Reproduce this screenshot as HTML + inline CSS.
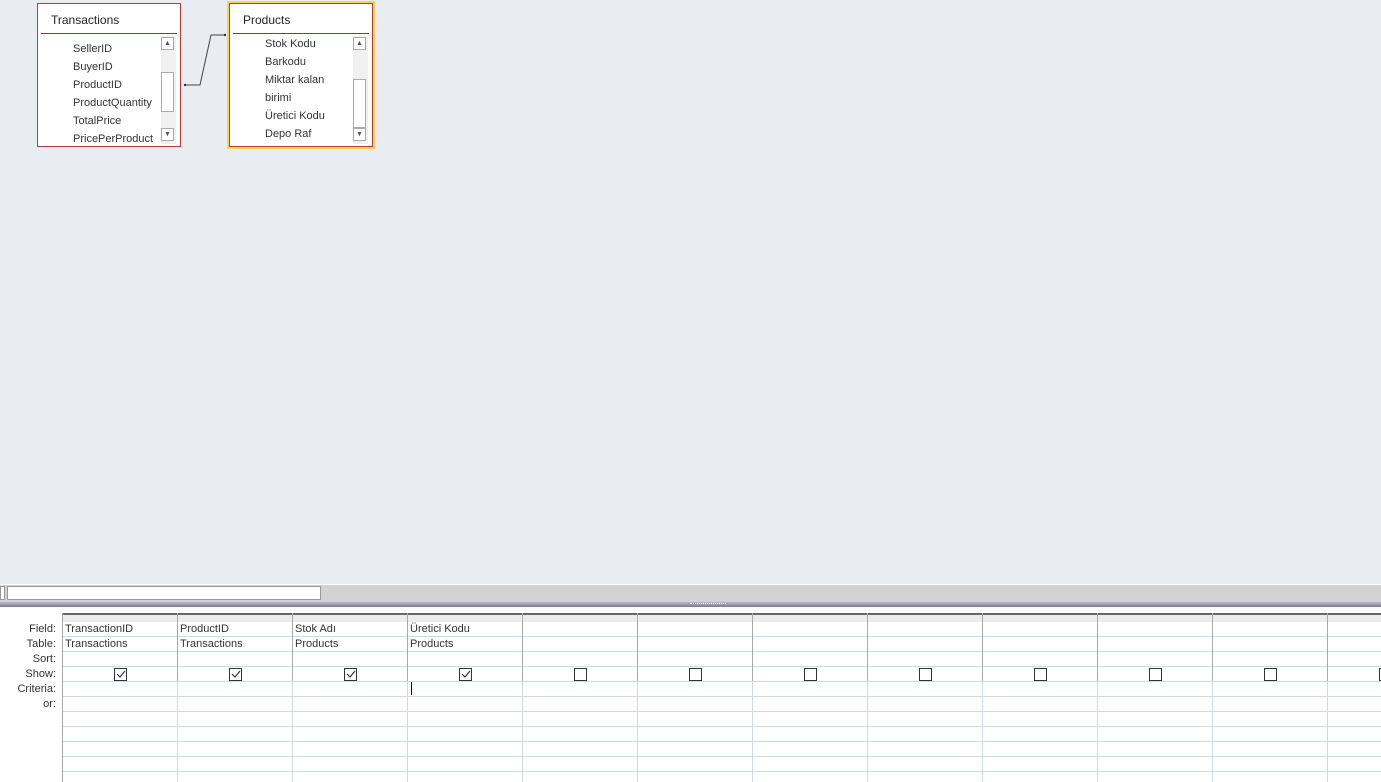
<!DOCTYPE html><html><head><style>
body{margin:0;width:1381px;height:782px;position:relative;overflow:hidden;font-family:"Liberation Sans",sans-serif;font-size:11px;color:#222;background:#fff}
.top{position:absolute;left:0;top:0;width:1381px;height:584px;background:#e9edf1}
.tbl{position:absolute;background:#fff;border:1px solid #b8383c;box-sizing:border-box}
.tbl .t{position:absolute;left:13px;top:9px;font-size:12px}
.tbl .ln{position:absolute;left:3px;right:3px;top:29px;height:1px;background:#8a3a3c}
.tbl .f{position:absolute;left:35px;font-size:11px;color:#333}
.sb{position:absolute;width:15px;background:#f0f0f0}
.ar{position:absolute;left:0;width:13px;height:13px;border:1px solid #aaa;background:#fff;box-sizing:border-box;font-size:7px;text-align:center;line-height:11px;color:#555}
.th{position:absolute;left:0;width:13px;border:1px solid #aaa;background:#fff;box-sizing:border-box}
.lab{position:absolute;right:1325px;font-size:11px;color:#333;text-align:right}
.cell{position:absolute;font-size:11px;color:#333}
</style></head><body>
<div class="top"></div>
<div class="tbl" style="left:37px;top:3px;width:144px;height:144px">
<div class="t">Transactions</div><div class="ln"></div>
<div class="f" style="top:30px;height:4px;overflow:hidden;width:80px"><div style="position:relative;top:-9px">PurchaseDate</div></div>
<div class="f" style="top:39px">SellerID</div><div class="f" style="top:57px">BuyerID</div><div class="f" style="top:75px">ProductID</div><div class="f" style="top:93px">ProductQuantity</div><div class="f" style="top:111px">TotalPrice</div><div class="f" style="top:129px">PricePerProduct</div>
<div class="sb" style="left:123px;top:32px;height:108px"><div class="ar" style="top:1px">▲</div><div class="th" style="top:36px;height:40px"></div><div class="ar" style="top:92px">▼</div></div>
</div>
<div style="position:absolute;left:227px;top:1px;width:148px;height:148px;background:#fdd54d"></div>
<div class="tbl" style="left:229px;top:3px;width:144px;height:144px">
<div class="t">Products</div><div class="ln"></div>
<div class="f" style="top:34px">Stok Kodu</div><div class="f" style="top:52px">Barkodu</div><div class="f" style="top:70px">Miktar kalan</div><div class="f" style="top:88px">birimi</div><div class="f" style="top:106px">Üretici Kodu</div><div class="f" style="top:124px">Depo Raf</div>
<div class="sb" style="left:123px;top:32px;height:108px"><div class="ar" style="top:1px">▲</div><div class="th" style="top:43px;height:49px"></div><div class="ar" style="top:92px">▼</div></div>
</div>
<svg style="position:absolute;left:0;top:0" width="400" height="150"><polyline points="185,85 200,85 211,35 226,35" fill="none" stroke="#444" stroke-width="1"/><circle cx="185" cy="85" r="1.2" fill="#333"/><circle cx="225" cy="35" r="1.2" fill="#333"/></svg>
<div style="position:absolute;left:0;top:584px;width:1381px;height:18px;background:#d2d2d2;border-top:1px solid #fff;box-sizing:border-box"></div>
<div style="position:absolute;left:0;top:586px;width:5px;height:14px;background:#fff;border:1px solid #999;box-sizing:border-box"></div>
<div style="position:absolute;left:7px;top:586px;width:314px;height:14px;background:#fff;border:1px solid #999;box-sizing:border-box"></div>
<div style="position:absolute;left:0;top:602px;width:1381px;height:5px;background:linear-gradient(#b8b8cc,#7a7a98)"></div>
<div style="position:absolute;left:690px;top:603px;width:36px;height:2px;border-top:1px dotted #fff"></div>
<div style="position:absolute;left:62px;top:613px;width:1319px;height:2px;background:#666"></div>
<div style="position:absolute;left:62px;top:615px;width:1319px;height:7px;background:#ececec"></div>
<svg style="position:absolute;left:0;top:613px" width="1381" height="169">
<g stroke="#d3d9e3" stroke-width="1">
<line x1="62" x2="1381" y1="23.5" y2="23.5"/><line x1="62" x2="1381" y1="38.5" y2="38.5"/><line x1="62" x2="1381" y1="53.5" y2="53.5"/><line x1="62" x2="1381" y1="68.5" y2="68.5"/><line x1="62" x2="1381" y1="83.5" y2="83.5"/><line x1="62" x2="1381" y1="98.5" y2="98.5"/><line x1="62" x2="1381" y1="113.5" y2="113.5"/><line x1="62" x2="1381" y1="128.5" y2="128.5"/><line x1="62" x2="1381" y1="143.5" y2="143.5"/><line x1="62" x2="1381" y1="158.5" y2="158.5"/>
</g>
<g stroke="#a8a8a8"><line x1="62.5" x2="62.5" y1="0" y2="169"/>
<line x1="177.5" x2="177.5" y1="0" y2="68"/><line x1="292.5" x2="292.5" y1="0" y2="68"/><line x1="407.5" x2="407.5" y1="0" y2="68"/><line x1="522.5" x2="522.5" y1="0" y2="68"/><line x1="637.5" x2="637.5" y1="0" y2="68"/><line x1="752.5" x2="752.5" y1="0" y2="68"/><line x1="867.5" x2="867.5" y1="0" y2="68"/><line x1="982.5" x2="982.5" y1="0" y2="68"/><line x1="1097.5" x2="1097.5" y1="0" y2="68"/><line x1="1212.5" x2="1212.5" y1="0" y2="68"/><line x1="1327.5" x2="1327.5" y1="0" y2="68"/></g>
<g stroke="#d3d9e3">
<line x1="177.5" x2="177.5" y1="68" y2="169"/><line x1="292.5" x2="292.5" y1="68" y2="169"/><line x1="407.5" x2="407.5" y1="68" y2="169"/><line x1="522.5" x2="522.5" y1="68" y2="169"/><line x1="637.5" x2="637.5" y1="68" y2="169"/><line x1="752.5" x2="752.5" y1="68" y2="169"/><line x1="867.5" x2="867.5" y1="68" y2="169"/><line x1="982.5" x2="982.5" y1="68" y2="169"/><line x1="1097.5" x2="1097.5" y1="68" y2="169"/><line x1="1212.5" x2="1212.5" y1="68" y2="169"/><line x1="1327.5" x2="1327.5" y1="68" y2="169"/></g>
</svg>
<div class="lab" style="top:623px">Field:</div><div class="lab" style="top:638px">Table:</div><div class="lab" style="top:653px">Sort:</div><div class="lab" style="top:668px">Show:</div><div class="lab" style="top:683px">Criteria:</div><div class="lab" style="top:698px">or:</div>
<div class="cell" style="left:65px;top:623px">TransactionID</div><div class="cell" style="left:65px;top:638px">Transactions</div>
<div class="cell" style="left:180px;top:623px">ProductID</div><div class="cell" style="left:180px;top:638px">Transactions</div>
<div class="cell" style="left:295px;top:623px">Stok Adı</div><div class="cell" style="left:295px;top:638px">Products</div>
<div class="cell" style="left:410px;top:623px">Üretici Kodu</div><div class="cell" style="left:410px;top:638px">Products</div>
<div style="position:absolute;left:411px;top:682px;width:1px;height:13px;background:#000"></div>
<svg style="position:absolute;left:0;top:668px" width="1381" height="13">
<g fill="#fff" stroke="#333"><rect x="114.5" y="0.5" width="12" height="12"/><rect x="229.5" y="0.5" width="12" height="12"/><rect x="344.5" y="0.5" width="12" height="12"/><rect x="459.5" y="0.5" width="12" height="12"/><rect x="574.5" y="0.5" width="12" height="12"/><rect x="689.5" y="0.5" width="12" height="12"/><rect x="804.5" y="0.5" width="12" height="12"/><rect x="919.5" y="0.5" width="12" height="12"/><rect x="1034.5" y="0.5" width="12" height="12"/><rect x="1149.5" y="0.5" width="12" height="12"/><rect x="1264.5" y="0.5" width="12" height="12"/><rect x="1379.5" y="0.5" width="12" height="12"/></g>
<g fill="none" stroke="#333" stroke-width="1.2"><polyline points="117,6 120,9 125,3"/><polyline points="232,6 235,9 240,3"/><polyline points="347,6 350,9 355,3"/><polyline points="462,6 465,9 470,3"/></g>
</svg>
</body></html>
